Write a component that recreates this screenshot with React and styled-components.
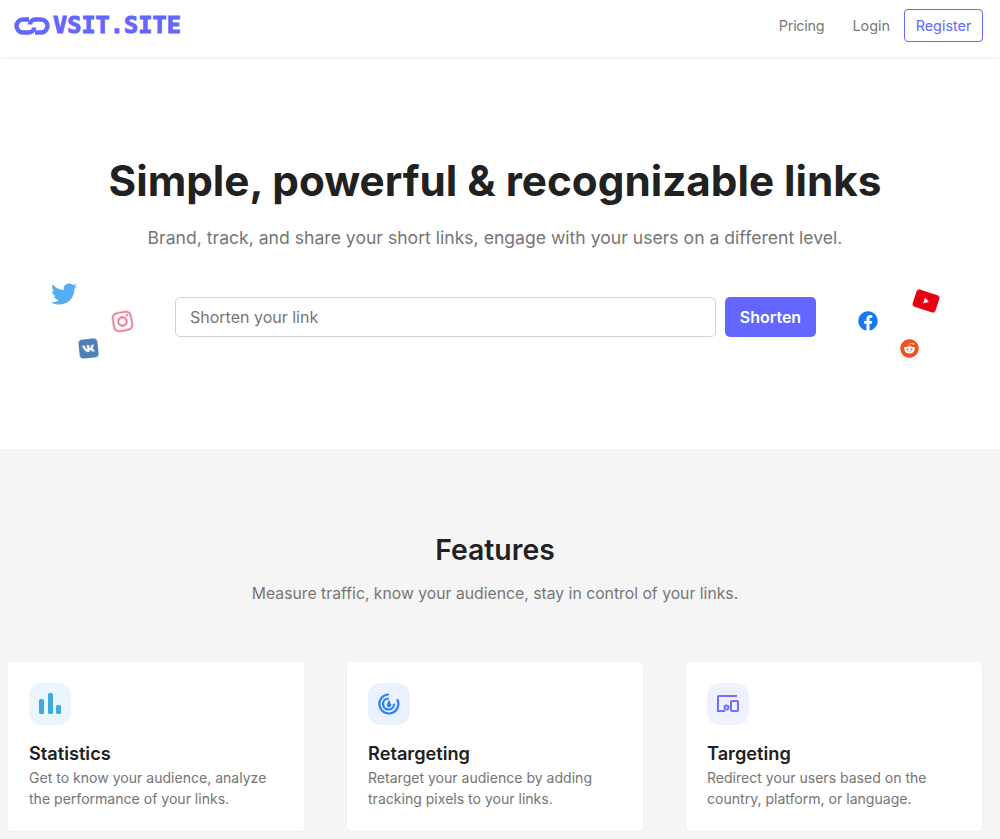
import React from "react";
import styled, { createGlobalStyle } from "styled-components";
import { FaTwitter, FaInstagram, FaVk, FaFacebook, FaReddit } from "react-icons/fa";

const Global = createGlobalStyle`
  html, body { margin: 0; padding: 0; background: #fff; }
  body { font-family: Inter, "Noto Sans", sans-serif; color: #212121; overflow: hidden; }
  * { box-sizing: border-box; }
`;
const Page = styled.div`height: 839px; overflow: hidden;`;
const Header = styled.header`
  height: 57px; display: flex; align-items: center; justify-content: space-between;
  padding: 0 17px 6px 13px; background: #fff; box-shadow: 0 1px 4px rgba(0,0,0,.08); position: relative;
`;
const Logo = styled.a`display: flex; align-items: center; gap: 2px; color: #6366ff;`;
const LogoText = styled.span`
  font-family: "DejaVu Sans Mono", monospace; font-weight: 700; font-size: 23.6px; line-height: 1;
  -webkit-text-stroke: 1px #6366ff;
`;
const Nav = styled.nav`display: flex; align-items: center;`;
const NavLink = styled.a`font-size: 14.4px; color: #7a7a7a; margin-right: 28px; letter-spacing: ${p => p.$ls || 0}px;`;
const Register = styled.a`
  font-size: 14.4px; color: #6366ff; border: 1px solid #6366ff; border-radius: 4px;
  height: 33px; width: 79px; display: flex; align-items: center; justify-content: center;
  margin-left: -14px;
`;
const Hero = styled.section`
  height: 392px; padding-top: 96px; position: relative; display: flex; flex-direction: column; align-items: center;
  padding-right: 10px;
`;
const Title = styled.h1`margin: 0; font-size: 42.24px; font-weight: 700; line-height: 55px; color: #212121;`;
const Subtitle = styled.p`margin: 17px 0 0; font-size: 17.6px; line-height: 26px; color: #757575;`;
const Form = styled.form`display: flex; gap: 9px; margin-top: 46px; padding-left: 1px;`;
const Input = styled.input`
  width: 541px; height: 40px; border: 1px solid #d4d4d4; border-radius: 5px; padding: 0 14px;
  font: 400 16px Inter, sans-serif; color: #212121; outline: none;
  &::placeholder { color: #757575; opacity: 1; }
`;
const Shorten = styled.button`
  width: 91px; height: 40px; border: 0; border-radius: 5px; background: #6366ff; color: #fff;
  font: 600 16px Inter, sans-serif;
`;
const Social = styled.span`
  position: absolute; left: ${p => p.$x}px; top: ${p => p.$y}px; width: ${p => p.$s}px; height: ${p => p.$s}px;
  display: flex; align-items: center; justify-content: center;
  color: ${p => p.$c}; font-size: ${p => p.$s}px; transform: rotate(${p => p.$r || 0}deg); filter: blur(.7px);
`;
const VkBox = styled(Social)`
  background: #4f7fb5; color: #fff; border-radius: 4px; font-size: 13px;
`;
const Features = styled.section`
  background: #f5f5f5; height: 390px; padding-top: 82px; display: flex; flex-direction: column; align-items: center;
`;
const FeatTitle = styled.h2`margin: 0 10px 0 0; font-size: 28.4px; line-height: 38px; font-weight: 600; color: #212121;`;
const FeatSub = styled.p`margin: 13px 10px 0 0; font-size: 15.75px; line-height: 24px; color: #757575;`;
const Grid = styled.div`
  align-self: stretch; display: grid; grid-template-columns: repeat(3, 296px); justify-content: space-between;
  padding: 0 18px 0 8px; margin-top: 56px;
`;
const Card = styled.article`
  height: 169px; background: #fff; border-radius: 4px; padding: 21px 21px; box-shadow: 0 1px 3px rgba(0,0,0,.04);
`;
const IconBox = styled.div`
  width: 42px; height: 42px; border-radius: 13px; background: ${p => p.$bg};
  display: flex; align-items: center; justify-content: center;
`;
const CardTitle = styled.h3`margin: 17px 0 0; font-size: 18.2px; line-height: 22px; font-weight: 600; color: #212121;`;
const CardText = styled.p`margin: 3px 0 0; font-size: 14.05px; line-height: 21px; color: #757575;`;

const ChainIcon = () => (
  <svg width="38" height="20" viewBox="0 0 38 20" fill="none" stroke="#6366ff" strokeWidth="4.4">
    <path d="M16 3.5H10a6.5 6.5 0 0 0 0 13h6a5 5 0 0 0 5-5" />
    <path d="M22 16.5h6a6.5 6.5 0 0 0 0-13h-6a5 5 0 0 0-5 5" />
  </svg>
);
const Bars = () => (
  <svg width="24" height="24" viewBox="0 0 24 24" fill="#3fa9e0">
    <rect x="1" y="7" width="5" height="15" rx="1.5" />
    <rect x="10" y="1" width="5" height="21" rx="1.5" />
    <rect x="18" y="13" width="5" height="9" rx="1.5" />
  </svg>
);
const Radar = () => (
  <svg width="24" height="24" viewBox="0 0 24 24" fill="none" stroke="#2f80f0" strokeWidth="2.2" strokeLinecap="round">
    <path d="M11 2.5A9.5 9.5 0 1 0 20.5 8" />
    <path d="M11 6.5A5.5 5.5 0 1 0 17 12.5" />
    <path d="M12 9.5V13" />
    <circle cx="12" cy="13" r="1.2" fill="#2f80f0" />
  </svg>
);
const Devices = () => (
  <svg width="24" height="24" viewBox="0 0 24 24" fill="none" stroke="#6c6fff" strokeWidth="2">
    <path d="M21 4H3a1 1 0 0 0-1 1v14h7" />
    <rect x="15" y="9" width="7" height="10" rx="1" />
    <circle cx="10.5" cy="15.5" r="2" />
  </svg>
);
const Youtube = () => (
  <svg width="24" height="18" viewBox="0 0 24 18">
    <rect width="24" height="18" rx="3" fill="#e60012" />
    <path d="M10 6l5 3-5 3z" fill="#fff" />
  </svg>
);

const features = [
  { title: "Statistics", bg: "#ebf5fd", Icon: Bars, text: ["Get to know your audience, analyze", "the performance of your links."] },
  { title: "Retargeting", bg: "#e9f2fe", Icon: Radar, text: ["Retarget your audience by adding", "tracking pixels to your links."] },
  { title: "Targeting", bg: "#f0f0ff", Icon: Devices, text: ["Redirect your users based on the", "country, platform, or language."] },
];

export default function App() {
  return (
    <Page>
      <Global />
      <Header>
        <Logo><ChainIcon /><LogoText>VSIT.SITE</LogoText></Logo>
        <Nav>
          <NavLink $ls={-0.25}>Pricing</NavLink>
          <NavLink>Login</NavLink>
          <Register>Register</Register>
        </Nav>
      </Header>
      <Hero>
        <Title>Simple, powerful &amp; recognizable links</Title>
        <Subtitle>Brand, track, and share your short links, engage with your users on a different level.</Subtitle>
        <Form onSubmit={e => e.preventDefault()}>
          <Input placeholder="Shorten your link" />
          <Shorten type="button">Shorten</Shorten>
        </Form>
        <Social $x={51} $y={224} $s={26} $c="#55acee" $r={0}><FaTwitter /></Social>
        <Social $x={111} $y={253} $s={23} $c="#ea6f8c" $r={-10}><FaInstagram /></Social>
        <VkBox $x={79} $y={282} $s={19} $r={-6}><FaVk /></VkBox>
        <Social $x={858} $y={254} $s={20} $c="#1877f2"><FaFacebook /></Social>
        <Social $x={914} $y={232} $s={24} $c="#e60012" $r={18}><Youtube /></Social>
        <Social $x={900} $y={282} $s={19} $c="#f4501e"><FaReddit /></Social>
      </Hero>
      <Features>
        <FeatTitle>Features</FeatTitle>
        <FeatSub>Measure traffic, know your audience, stay in control of your links.</FeatSub>
        <Grid>
          {features.map(({ title, bg, Icon, text }) => (
            <Card key={title}>
              <IconBox $bg={bg}><Icon /></IconBox>
              <CardTitle>{title}</CardTitle>
              <CardText>{text[0]}<br />{text[1]}</CardText>
            </Card>
          ))}
        </Grid>
      </Features>
    </Page>
  );
}
